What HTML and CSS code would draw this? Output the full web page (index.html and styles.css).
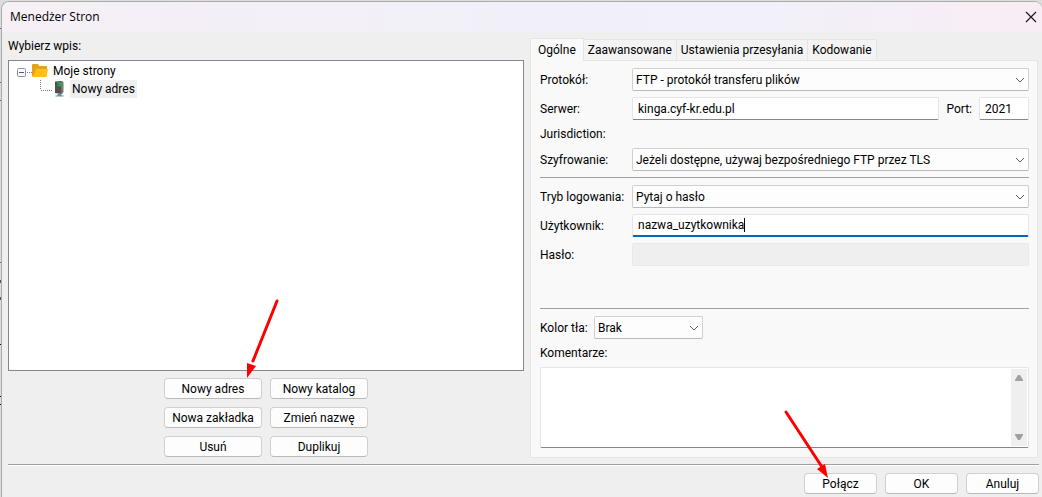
FILE: index.html
```html
<!DOCTYPE html>
<html lang="pl">
<head>
<meta charset="utf-8">
<title>Menedżer Stron</title>
<link rel="stylesheet" href="styles.css">
</head>
<body>
<div class="desktop">
<main class="window">
  <header class="titlebar">
    <h1 class="title">Menedżer Stron</h1>
    <button class="close" type="button" aria-label="Zamknij">
      <svg width="12" height="12" viewBox="0 0 12 12"><path d="M1 1l10 10M11 1L1 11" stroke="#1a1a1a" stroke-width="1.2" fill="none"/></svg>
    </button>
  </header>
  <div class="content">
    <section class="sites">
      <h2 class="sites-label">Wybierz wpis:</h2>
      <ul class="tree">
        <li class="node">
          <svg width="31" height="18" viewBox="0 0 31 18">
            <rect x="0.500" y="6.500" width="8" height="8" rx="1" fill="#fafafa" stroke="#919191"/>
            <path d="M2 10.500h5" stroke="#4357a5"/>
            <path d="M10 10.500h5" stroke="#808080" stroke-dasharray="1 1"/>
            <path d="M15 3q0-1 1-1h5l1 2h7q1 0 1 1v9H15z" fill="#e3a21a"/>
            <path d="M19 7h12l-1.500 7q0 1-1 1H16q-1 0-1-1l2-1z" fill="#ffc10e"/>
          </svg>
          <span class="node-name">Moje strony</span>
        </li>
        <li class="node">
          <svg class="child-icon" width="48" height="18" viewBox="0 0 48 18">
            <path d="M23.500 0v10" stroke="#808080" stroke-dasharray="1 1"/>
            <path d="M24 10.500h11" stroke="#808080" stroke-dasharray="1 1"/>
            <path d="M38 1.500l6-.5 2 1v11l-2 1-6-1z" fill="#505050"/>
            <path d="M44 1l2.500 1v10L44 14z" fill="#777"/>
            <path d="M40 3h4M40 5.500h4" stroke="#18b52d" stroke-width="1.500"/>
            <path d="M43 3v2" stroke="#18d52d"/>
            <path d="M40.500 14h4v1.500h2v1h-8v-1h2z" fill="#6a8ba1"/>
          </svg>
          <span class="node-name selected">Nowy adres</span>
        </li>
      </ul>
      <div class="site-actions">
        <button class="btn" type="button">Nowy adres</button>
        <button class="btn" type="button">Nowy katalog</button>
        <button class="btn" type="button">Nowa zakładka</button>
        <button class="btn" type="button">Zmień nazwę</button>
        <button class="btn" type="button">Usuń</button>
        <button class="btn" type="button">Duplikuj</button>
      </div>
    </section>
    <section class="settings">
      <div class="tabs" role="tablist">
        <button class="tab active" type="button" role="tab" aria-selected="true">Ogólne</button>
        <button class="tab" type="button" role="tab">Zaawansowane</button>
        <button class="tab" type="button" role="tab">Ustawienia przesyłania</button>
        <button class="tab" type="button" role="tab">Kodowanie</button>
      </div>
      <form class="panel">
        <div class="row">
          <label class="label" for="protocol">Protokół:</label>
          <div class="select-box">
            <select class="field select" id="protocol"><option>FTP - protokół transferu plików</option></select>
            <svg class="chevron" width="10" height="6" viewBox="0 0 10 6"><path d="M1 1l4 4 4-4" fill="none" stroke="#5c5c5c"/></svg>
          </div>
        </div>
        <div class="row">
          <label class="label" for="server">Serwer:</label>
          <input class="field text" id="server" type="text" value="kinga.cyf-kr.edu.pl">
          <label class="port-label" for="port">Port:</label>
          <input class="field text port" id="port" type="text" value="2021">
        </div>
        <div class="note">Jurisdiction:</div>
        <div class="row">
          <label class="label" for="encryption">Szyfrowanie:</label>
          <div class="select-box">
            <select class="field select" id="encryption"><option>Jeżeli dostępne, używaj bezpośredniego FTP przez TLS</option></select>
            <svg class="chevron" width="10" height="6" viewBox="0 0 10 6"><path d="M1 1l4 4 4-4" fill="none" stroke="#5c5c5c"/></svg>
          </div>
        </div>
        <hr class="rule">
        <div class="row">
          <label class="label" for="logon">Tryb logowania:</label>
          <div class="select-box">
            <select class="field select" id="logon"><option>Pytaj o hasło</option></select>
            <svg class="chevron" width="10" height="6" viewBox="0 0 10 6"><path d="M1 1l4 4 4-4" fill="none" stroke="#5c5c5c"/></svg>
          </div>
        </div>
        <div class="row">
          <label class="label" for="user">Użytkownik:</label>
          <div class="select-box">
            <input class="field text focused" id="user" type="text" value="nazwa_uzytkownika">
            <span class="caret"></span>
          </div>
        </div>
        <div class="row">
          <label class="label" for="password">Hasło:</label>
          <input class="field text" id="password" type="password" disabled>
        </div>
        <hr class="rule lower">
        <div class="row">
          <label class="color-label" for="color">Kolor tła:</label>
          <div class="select-box color">
            <select class="field select" id="color"><option>Brak</option></select>
            <svg class="chevron" width="10" height="6" viewBox="0 0 10 6"><path d="M1 1l4 4 4-4" fill="none" stroke="#5c5c5c"/></svg>
          </div>
        </div>
        <label class="comments-label" for="comments">Komentarze:</label>
        <div class="comments">
          <textarea class="comments-text" id="comments"></textarea>
          <div class="scrollbar">
            <svg width="8" height="6" viewBox="0 0 8 6"><path d="M3 0h2l3 5v1H0V5z" fill="#a0a0a0"/></svg>
            <svg width="8" height="6" viewBox="0 0 8 6"><path d="M3 6h2l3-5V0H0v1z" fill="#a0a0a0"/></svg>
          </div>
        </div>
      </form>
    </section>
  </div>
  <footer class="footer">
    <button class="btn" type="button">Połącz</button>
    <button class="btn" type="button">OK</button>
    <button class="btn" type="button">Anuluj</button>
  </footer>
</main>
<svg class="arrow arrow-new" width="40" height="84" viewBox="0 0 40 84"><path d="M34 6L10 66" stroke="#f00" stroke-width="3" stroke-linecap="round"/><path d="M4 83l0-15 9 3z" fill="#f00"/></svg>
<svg class="arrow arrow-connect" width="50" height="72" viewBox="0 0 50 72"><path d="M4 5L40 60" stroke="#f00" stroke-width="3" stroke-linecap="round"/><path d="M46 71L35 62l8-5z" fill="#f00"/></svg>
</div>
</body>
</html>
```
FILE: styles.css
```css
* { box-sizing: border-box; }

body {
  margin: 0;
  font: 12px/16px Roboto, "Open Sans", sans-serif;
  color: #000;
}

button, input, select, textarea { font: inherit; color: inherit; margin: 0; }

.desktop {
  position: relative;
  min-height: 100vh;
  display: flex;
  padding: 1px 0 0 1px;
  background:
    linear-gradient(#555, #555) 0 280px / 2px 3px no-repeat,
    linear-gradient(#555, #555) 0 297px / 2px 3px no-repeat,
    linear-gradient(#111, #111) 0 344px / 2px 1px no-repeat,
    linear-gradient(#111, #111) 0 396px / 2px 1px no-repeat,
    linear-gradient(#111, #111) 0 404px / 2px 1px no-repeat,
    linear-gradient(#5268a8, #5268a8) 0 28px / 2px 1px no-repeat,
    linear-gradient(#5268a8, #5268a8) 0 82px / 2px 1px no-repeat,
    linear-gradient(#5268a8, #5268a8) 0 100px / 2px 1px no-repeat,
    linear-gradient(#5268a8, #5268a8) 0 262px / 2px 1px no-repeat,
    #ddd;
}

.window {
  flex: 1;
  display: flex;
  flex-direction: column;
  border: solid #ababab;
  border-width: 1px 0 0 1px;
  border-radius: 8px 8px 0 0;
  background: #efefef;
  overflow: hidden;
}

.titlebar {
  display: flex;
  align-items: center;
  justify-content: space-between;
  height: 30px;
  padding: 0 5px 0 8px;
  background: linear-gradient(90deg, #f6eff6, #f1f0f8 50%, #f2f0f8 75%, #f9edf5);
}

.title { margin: 0; font: 12px/16px "Open Sans", sans-serif; }

.close { display: flex; padding: 0; border: 0; background: none; }

.content {
  flex: 1;
  display: flex;
  gap: 6px;
  padding: 6px 4px 6px 6px;
}

.sites {
  flex: 516;
  min-width: 0;
  display: flex;
  flex-direction: column;
  padding-bottom: 1px;
}

.sites-label { margin: 0; font-size: 12px; font-weight: 400; }

.tree {
  flex: 1;
  margin: 6px 0 7px;
  padding: 1px 8px;
  list-style: none;
  border: 1px solid #828790;
  background: #fff;
}

.node { display: flex; align-items: center; height: 18px; }
.node-name { padding: 0 2px; margin-left: 3px; line-height: 18px; }
.child-icon { margin-right: 2px; }

.selected { background: #efefef; }

.site-actions {
  display: grid;
  grid-template-columns: 98px 98px;
  justify-content: center;
  gap: 8px;
}

.btn {
  height: 21px;
  padding: 0;
  border: 1px solid #d0d0d0;
  border-bottom-color: #bababa;
  border-radius: 4px;
  background: #fdfdfd;
  line-height: 18px;
}

.settings { flex: 508; min-width: 0; display: flex; flex-direction: column; }

.tabs { display: flex; align-items: flex-end; }

.tab {
  height: 21px;
  padding: 0 4px;
  border: solid #e5e5e5;
  border-width: 1px 1px 0 0;
  background: #f3f3f3;
  white-space: nowrap;
}

.active {
  height: 23px;
  padding: 0 7px 1px;
  border-left-width: 1px;
  background: #f9f9f9;
  margin-bottom: -1px;
  position: relative;
}

.panel {
  flex: 1;
  display: flex;
  flex-direction: column;
  gap: 6px;
  padding: 7px 8px 9px 9px;
  border: 1px solid #e5e5e5;
  background: #f9f9f9;
}

.row { display: flex; align-items: center; }
.label { width: 92px; flex: none; }
.port-label { padding: 0 7px; }
.color-label { width: 54px; flex: none; }

.field {
  flex: 1;
  width: 100%;
  min-width: 0;
  height: 23px;
  border: 1px solid #e5e5e5;
  border-radius: 2px;
  background: #fff;
  outline: 0;
}

.text { padding: 0 5px; border-bottom-color: #868686; }
.text:disabled { border-color: #e9e9e9; background: #efefef; }
.port { flex: none; width: 50px; }
.focused { border-bottom: 2px solid #0067c0; }

.select {
  appearance: none;
  padding: 0 20px 0 3px;
  border-color: #d0d0d0;
  border-bottom-color: #bababa;
  background: #fdfdfd;
}

.select-box { position: relative; flex: 1; display: flex; }
.chevron { position: absolute; right: 4px; top: 9px; pointer-events: none; }
.caret { position: absolute; left: 112px; top: 4px; width: 1px; height: 14px; background: #000; }
.color { flex: none; width: 109px; }

.rule { width: 100%; margin: 0 0 1px; border: 0; border-top: 1px solid #a0a0a0; }
.lower { margin: 36px 0 1px; }

.comments-label { line-height: 16px; }

.comments {
  flex: 1;
  display: flex;
  min-height: 80px;
  padding: 1px;
  border: 1px solid #e5e5e5;
  border-bottom-color: #868686;
  border-radius: 2px;
  background: #fff;
}

.comments-text { flex: 1; border: 0; padding: 3px; resize: none; outline: 0; background: #fff; }

.scrollbar {
  width: 16px;
  display: flex;
  flex-direction: column;
  justify-content: space-between;
  align-items: center;
  padding: 6px 0;
  background: #efefef;
}

.footer {
  display: grid;
  grid-template-columns: 73px 73px 73px;
  justify-content: end;
  gap: 8px;
  margin: 0 3px 0 6px;
  padding: 8px 0 3px;
  border-top: 1px solid #a0a0a0;
  box-shadow: inset 0 1px #fff;
}

.arrow { position: absolute; fill: none; pointer-events: none; }
.arrow-new { left: 243px; top: 295px; }
.arrow-connect { left: 782px; top: 407px; }
```
